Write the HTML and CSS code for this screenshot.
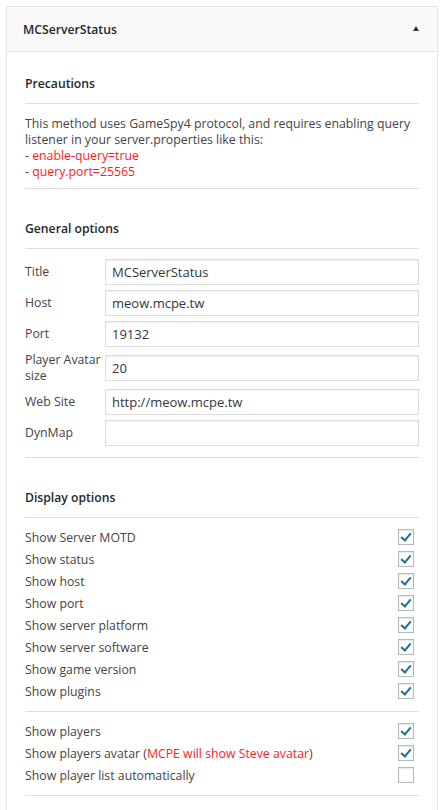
FILE: index.html
```html
<!DOCTYPE html>
<html>
<head>
<meta charset="utf-8">
<link rel="stylesheet" href="styles.css">
</head>
<body>
<div class="widget">
  <div class="widget-top">
    <h3 class="widget-title">MCServerStatus</h3>
    <span class="arrow"></span>
  </div>
  <div class="widget-inside">
    <h4 class="sec-title first">Precautions</h4>
    <hr class="sep">
    <p class="note">This method uses GameSpy4 protocol, and requires enabling query listener in your server.properties like this:<br>- <span class="red">enable-query=true</span><br>- <span class="red">query.port=25565</span></p>
    <hr class="sep">

    <h4 class="sec-title">General options</h4>
    <hr class="sep">
    <div class="form">
      <label class="flabel">Title</label><input class="finput" type="text" value="MCServerStatus">
      <label class="flabel">Host</label><input class="finput" type="text" value="meow.mcpe.tw">
      <label class="flabel">Port</label><input class="finput" type="text" value="19132">
      <label class="flabel">Player Avatar size</label><input class="finput" type="text" value="20">
      <label class="flabel">Web Site</label><input class="finput" type="text" value="http://meow.mcpe.tw">
      <label class="flabel">DynMap</label><input class="finput" type="text" value="">
    </div>
    <hr class="sep">

    <h4 class="sec-title">Display options</h4>
    <hr class="sep">
    <ul class="checks">
      <li class="check-row"><span>Show Server MOTD</span><span class="cb on"></span></li>
      <li class="check-row"><span>Show status</span><span class="cb on"></span></li>
      <li class="check-row"><span>Show host</span><span class="cb on"></span></li>
      <li class="check-row"><span>Show port</span><span class="cb on"></span></li>
      <li class="check-row"><span>Show server platform</span><span class="cb on"></span></li>
      <li class="check-row"><span>Show server software</span><span class="cb on"></span></li>
      <li class="check-row"><span>Show game version</span><span class="cb on"></span></li>
      <li class="check-row"><span>Show plugins</span><span class="cb on"></span></li>
    </ul>
    <hr class="sep">
    <ul class="checks">
      <li class="check-row"><span>Show players</span><span class="cb on"></span></li>
      <li class="check-row"><span>Show players avatar (<span class="red">MCPE will show Steve avatar</span>)</span><span class="cb on"></span></li>
      <li class="check-row"><span>Show player list automatically</span><span class="cb"></span></li>
    </ul>
    <hr class="sep">
  </div>
</div>
</body>
</html>
```

FILE: styles.css
```css
html, body {
  margin: 0;
  padding: 0;
  background: #ffffff;
}
body {
  font-family: "Open Sans", "Noto Sans", sans-serif;
  font-size: 12.3px;
  color: #444444;
}
.widget {
  margin: 6px 0 0 6px;
  width: 430px;
  border: 1px solid #e5e5e5;
  border-bottom: none;
  background: #ffffff;
}
.widget-top {
  height: 44px;
  background: #f9f9f9;
  border-bottom: 1px solid #e5e5e5;
  display: flex;
  align-items: center;
  justify-content: space-between;
  padding: 0 18px 0 16px;
}
.widget-title {
  margin: 0;
  font-size: 12.2px;
  font-weight: 600;
  color: #23282d;
}
.arrow {
  width: 0;
  height: 0;
  border-left: 3.5px solid transparent;
  border-right: 3.5px solid transparent;
  border-bottom: 5px solid #32373c;
  margin-top: -2px;
}
.widget-inside {
  padding: 0 18px 14px 18px;
}
.sec-title {
  margin: 30px 0 9px 0;
  height: 20px;
  line-height: 20px;
  font-size: 12.2px;
  font-weight: 600;
  color: #23282d;
}
.sec-title.first {
  margin-top: 22px;
}
.sep {
  margin: 0;
  border: 0;
  border-top: 1px solid #dddddd;
  height: 0;
}
.note {
  margin: 12px 0 8px 0;
  line-height: 16px;
}
.red {
  color: #ff1a1a;
}
.form {
  display: grid;
  grid-template-columns: 80px 1fr;
  row-gap: 5px;
  align-items: center;
  margin: 10px 0 11px 0;
}
.flabel {
  line-height: 16px;
}
.finput {
  box-sizing: border-box;
  height: 26px;
  margin: 0;
  padding: 0 6px;
  border: 1px solid #dddddd;
  box-shadow: inset 0 1px 2px rgba(0, 0, 0, 0.07);
  font-family: inherit;
  font-size: 13px;
  color: #32373c;
  outline: none;
  width: 100%;
}
.checks {
  list-style: none;
  margin: 8px 0 9px 0;
  padding: 0;
}
.check-row {
  height: 22px;
  display: flex;
  align-items: center;
  justify-content: space-between;
}
.cb {
  box-sizing: border-box;
  width: 16px;
  height: 16px;
  margin-right: 5px;
  border: 1px solid #b4b9be;
  box-shadow: inset 0 1px 2px rgba(0, 0, 0, 0.1);
  background: #ffffff;
  position: relative;
}
.cb.on::after {
  content: "";
  position: absolute;
  left: 4px;
  top: 1px;
  width: 4px;
  height: 8px;
  border-right: 2.5px solid #1e6fa0;
  border-bottom: 2.5px solid #1e6fa0;
  transform: rotate(40deg);
}
```
